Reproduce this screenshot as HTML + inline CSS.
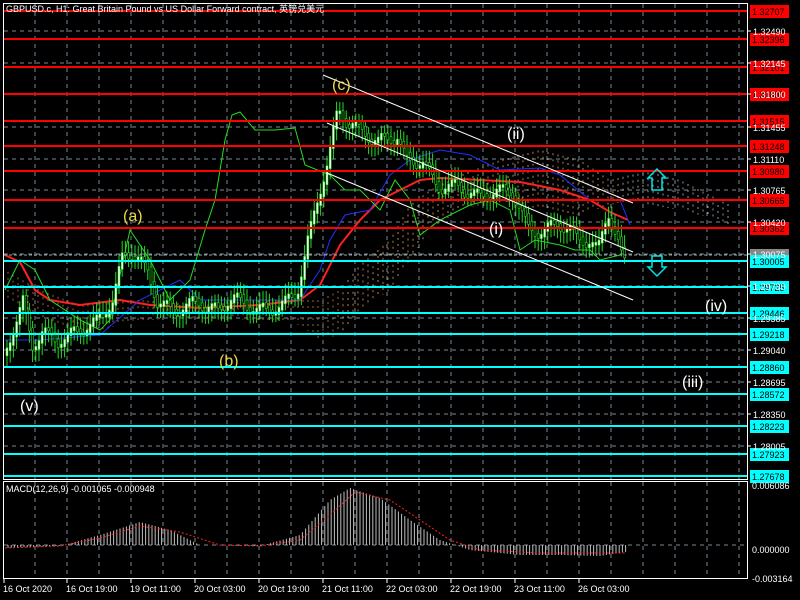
<!DOCTYPE html>
<html><head><meta charset="utf-8"><style>
html,body{margin:0;padding:0;background:#000;width:800px;height:600px;overflow:hidden}
svg{display:block}
text{font-family:"Liberation Sans","Noto Sans CJK SC",sans-serif}
</style></head><body>
<svg id="s" width="800" height="600" xmlns="http://www.w3.org/2000/svg">
<rect width="800" height="600" fill="#000"/>
<g id="grid" stroke="#7a8a99" stroke-dasharray="4,4" stroke-width="1"></g>
<g id="cloud"></g>
<g id="ind"></g>
<g id="candles"></g>
<g id="lv"></g>
<g stroke="#fff" stroke-width="1">
<line x1="323" y1="75" x2="633" y2="203"/>
<line x1="327" y1="123" x2="633" y2="252"/>
<line x1="327" y1="173" x2="633" y2="300"/>
</g>
<g font-size="16" fill="#e8d84a">
<text x="332" y="90">(c)</text><text x="123" y="221">(a)</text><text x="219" y="366">(b)</text>
</g>
<g font-size="16" fill="#fff">
<text x="20" y="411">(v)</text><text x="507" y="139">(ii)</text><text x="489" y="234">(i)</text>
<text x="705" y="311">(iv)</text><text x="682" y="387">(iii)</text>
</g>
<g fill="none" stroke="#00e5e5" stroke-width="1.5">
<path d="M652 190 V178 H648 L657 169 L666 178 H662 V190 Z"/>
<path d="M652 256 V267 H648 L657 276 L666 267 H662 V256 Z"/>
</g>
<text x="6" y="12" font-size="9" fill="#fff">GBPUSD.c, H1: Great Britain Pound vs US Dollar Forward contract, 英镑兑美元</text>
<text x="6" y="492" font-size="9" fill="#fff">MACD(12,26,9) -0.001065 -0.000948</text>
<g id="macd"></g>
<g fill="none" stroke="#fff" stroke-width="1">
<rect x="3.5" y="3.5" width="744" height="476"/>
<rect x="3.5" y="481.5" width="744" height="97"/>
</g>
<g id="axis" font-size="9" fill="#fff"></g>
</svg>
<script>
const NS="http://www.w3.org/2000/svg";
function el(p,t,a,txt){const e=document.createElementNS(NS,t);for(const k in a)e.setAttribute(k,a[k]);if(txt!=null)e.textContent=txt;document.getElementById(p).appendChild(e);return e;}
for(let x=35;x<747;x+=32){el('grid','line',{x1:x,y1:4,x2:x,y2:479});el('grid','line',{x1:x,y1:482,x2:x,y2:578});}
const gy=[[31,"1.32490"],[63,"1.32145"],[94,"1.31800"],[127,"1.31455"],[159,"1.31110"],[190,"1.30765"],[222,"1.30420"],[254,"1.30075"],[286,"1.29730"],[318,"1.29385"],[350,"1.29040"],[382,"1.28695"],[414,"1.28350"],[446,"1.28005"]];
gy.forEach(g=>{el('grid','line',{x1:4,y1:g[0],x2:747,y2:g[0]});el('axis','line',{x1:747,y1:g[0],x2:751,y2:g[0],stroke:'#fff'});el('axis','text',{x:753,y:g[0]+4},g[1]);});
el('grid','line',{x1:4,y1:545,x2:747,y2:545});
[[485,"0.006086"],[549,"0.000000"],[578,"-0.003164"]].forEach(a=>el('axis','text',{x:752,y:a[0]+4},a[1]));
const red=[[11,"1.32707"],[39,"1.32396"],[67,"1.32101"],[94,"1.31807"],[121,"1.31515"],[146,"1.31248"],[171,"1.30980"],[200,"1.30665"],[228,"1.30362"]];
const cy=[[261,"1.30005"],[287,"1.29725"],[313,"1.29446"],[334,"1.29218"],[367,"1.28860"],[394,"1.28572"],[426,"1.28223"],[454,"1.27923"],[476,"1.27678"]];
el('lv','line',{x1:4,y1:255,x2:747,y2:255,stroke:'#9aa',"stroke-dasharray":"3,2"});
el('lv','rect',{x:750,y:249,width:39,height:13,fill:'#888'});
red.forEach(r=>{el('lv','line',{x1:4,y1:r[0],x2:747,y2:r[0],stroke:'#ff0000','stroke-width':2});el('lv','rect',{x:750,y:r[0]-6,width:39,height:13,fill:'#ff0000'});el('lv','text',{x:752,y:r[0]+4,'font-size':9,fill:'#000'},r[1]);});
cy.forEach(r=>{el('lv','line',{x1:4,y1:r[0],x2:747,y2:r[0],stroke:'#00ffff','stroke-width':2});el('lv','rect',{x:750,y:r[0]-6,width:39,height:13,fill:'#00ffff'});el('lv','text',{x:752,y:r[0]+4,'font-size':9,fill:'#000'},r[1]);});
function interp(pts,x){for(let i=0;i<pts.length-1;i++){if(x>=pts[i][0]&&x<=pts[i+1][0]){const t=(x-pts[i][0])/(pts[i+1][0]-pts[i][0]);return pts[i][1]+t*(pts[i+1][1]-pts[i][1]);}}return pts[pts.length-1][1];}
const P=[[5,360],[15,330],[25,300],[35,345],[45,330],[60,340],[80,330],[100,320],[115,300],[125,255],[135,250],[150,270],[160,300],[175,310],[200,300],[220,310],[235,295],[250,305],[270,310],[290,300],[300,290],[310,240],[320,200],[330,160],[340,110],[350,120],[365,130],[380,140],[400,135],[410,160],[425,160],[440,185],[460,185],[480,195],[500,190],[515,190],[530,225],[545,232],[560,220],[575,232],[590,240],[600,250],[610,210],[620,240],[625,258]];
const CT=[[5,270],[40,290],[80,305],[140,300],[200,305],[260,300],[300,300],[320,300],[340,290],[360,265],[390,240],[410,205],[430,190],[460,175],[500,160],[540,150],[580,160],[610,180],[630,175],[650,172],[680,180],[700,190],[730,205]];
const CB=[[5,300],[40,320],[80,335],[140,320],[200,320],[260,320],[300,325],[320,340],[340,335],[360,310],[390,290],[410,260],[430,230],[460,210],[500,200],[540,210],[580,215],[610,205],[630,200],[650,205],[680,210],[700,215],[730,225]];
for(let x=8;x<730;x+=5){const t=interp(CT,x),b=interp(CB,x);el('cloud','line',{x1:x,y1:t,x2:x,y2:b,stroke:x<340?'#c87a4a':(x<620?'#e8a060':'#bbb'),'stroke-width':1,'stroke-dasharray':'2,4','stroke-opacity':0.8});}
function pl(pts,c,w){el('ind','polyline',{points:pts.map(p=>p.join(',')).join(' '),fill:'none',stroke:c,'stroke-width':w});}
pl([[5,255],[20,262],[35,290],[50,300],[80,305],[120,300],[150,305],[200,308],[260,305],[300,300],[320,285],[340,245],[360,220],[380,200],[400,190],[420,180],[440,178],[480,180],[520,182],[560,190],[590,200],[610,212],[628,220]],'#ff2020',2);
pl([[5,340],[40,340],[100,335],[140,300],[180,280],[200,300],[260,300],[300,300],[320,270],[330,240],[345,215],[370,210],[390,175],[410,160],[440,150],[470,155],[500,170],[540,168],[560,175],[590,200],[620,200],[630,225]],'#2030ff',1);
pl([[5,290],[20,260],[35,270],[50,300],[80,320],[100,330],[110,320],[130,230],[150,260],[170,300],[190,280],[205,230],[215,200],[225,140],[232,115],[240,112],[255,130],[275,130],[295,128],[305,165],[330,175],[345,190],[360,190],[380,210],[395,180],[410,200],[420,235],[440,220],[470,205],[490,200],[510,210],[520,250],[535,240],[560,245],[575,250],[590,250],[600,260],[620,255]],'#22dd22',1);
for(let x=6;x<626;x+=3.2){const y=interp(P,x)+(Math.sin(x*1.7)*6);const y2=interp(P,x+3.2)+(Math.sin((x+3.2)*1.7)*6);const h=Math.abs(y2-y)+3;const top=Math.min(y,y2);
el('candles','line',{x1:x+1,y1:top-6-Math.abs(Math.sin(x))*6,x2:x+1,y2:top+h+6+Math.abs(Math.cos(x))*6,stroke:'#22dd22'});
el('candles','rect',{x:x,y:top,width:2,height:h,fill:y2>y?'#000':'#fff',stroke:'#22dd22','stroke-width':0.6});}
const M=[[5,548],[60,546],[100,535],[140,522],[170,530],[200,545],[260,546],[300,535],[330,500],[350,488],[380,498],[410,520],[440,540],[470,550],[520,555],[560,555],[600,556],[625,552]];
for(let x=8;x<626;x+=3.2){const y=interp(M,x);el('macd','line',{x1:x,y1:545,x2:x,y2:y,stroke:'#c0c0c0'});}
const S=[[5,548],[60,546],[100,538],[140,526],[180,532],[220,545],[260,546],[300,540],[330,515],[355,492],[390,500],[420,520],[450,540],[480,550],[540,553],[625,553]];
el('macd','polyline',{points:S.map(p=>p.join(',')).join(' '),fill:'none',stroke:'#ff2020','stroke-dasharray':'2,2'});
const D=["16 Oct 2020","16 Oct 19:00","19 Oct 11:00","20 Oct 03:00","20 Oct 19:00","21 Oct 11:00","22 Oct 03:00","22 Oct 19:00","23 Oct 11:00","26 Oct 03:00"];
D.forEach((d,i)=>{const x=i==0?3:2+64*i;el('axis','text',{x:x,y:592},d);el('axis','line',{x1:i==0?4:3+64*i,y1:579,x2:i==0?4:3+64*i,y2:583,stroke:'#fff'});});
</script>
</body></html>
